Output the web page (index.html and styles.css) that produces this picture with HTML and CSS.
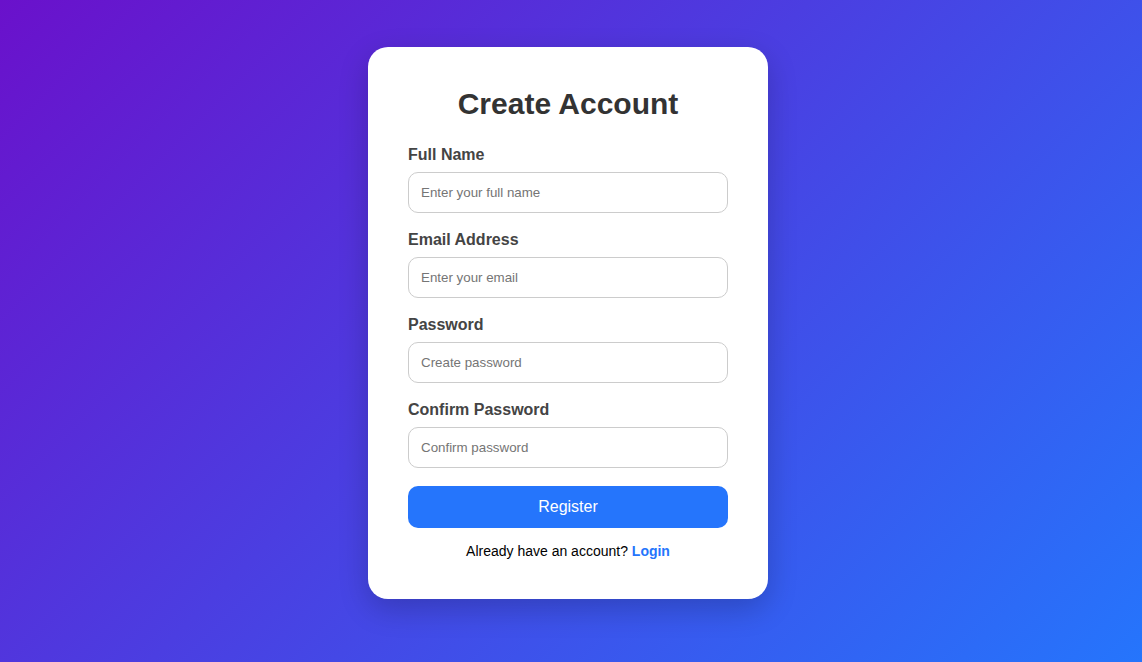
FILE: index.html
```html
<!DOCTYPE html>
<html lang="en">
<head>
  <meta charset="UTF-8" />
  <meta name="viewport" content="width=device-width, initial-scale=1.0"/>
  <title>Create Account</title>
  <link rel="stylesheet" href="styles.css">
</head>
<body>
  <div class="card">
    <h2>Create Account</h2>
    <form>
      <div class="field">
        <label for="fullName">Full Name</label>
        <input type="text" id="fullName" placeholder="Enter your full name"/>
      </div>
      <div class="field">
        <label for="email">Email Address</label>
        <input type="email" id="email" placeholder="Enter your email"/>
      </div>
      <div class="field">
        <label for="password">Password</label>
        <input type="password" id="password" placeholder="Create password"/>
      </div>
      <div class="field">
        <label for="confirm">Confirm Password</label>
        <input type="password" id="confirm" placeholder="Confirm password"/>
      </div>
      <button type="submit" class="register">Register</button>
    </form>
    <p class="footer">Already have an account? <a href="#">Login</a></p>
  </div>
</body>
</html>
```

FILE: styles.css
```css
* {
  box-sizing: border-box;
}

body {
  margin: 0;
  min-height: 100vh;
  display: flex;
  justify-content: center;
  align-items: flex-start;
  padding: 47px 6px 0 0;
  font-family: "Liberation Sans", Arial, sans-serif;
  background: linear-gradient(135deg, #6a11cb, #2575fc);
}

.card {
  width: 400px;
  padding: 40px;
  background: #fff;
  border-radius: 20px;
  box-shadow: 0 10px 30px rgba(0, 0, 0, 0.2);
}

.card h2 {
  margin: 0 0 25px;
  text-align: center;
  font-size: 30px;
  line-height: 34px;
  color: #333;
}

.field {
  display: flex;
  flex-direction: column;
  margin-bottom: 18px;
}

.field label {
  font-size: 16px;
  line-height: 18px;
  font-weight: bold;
  color: #444;
  margin-bottom: 8px;
}

.field input {
  height: 41px;
  padding: 0 12px;
  border: 1px solid #ccc;
  border-radius: 10px;
  font-family: inherit;
  font-size: 13.333px;
  color: #333;
  outline: none;
}

.field input::placeholder {
  color: #757575;
}

.register {
  display: block;
  width: 100%;
  height: 42px;
  border: none;
  border-radius: 10px;
  background-color: #2575fc;
  color: #fff;
  font-family: inherit;
  font-size: 16px;
  cursor: pointer;
}

.register:hover {
  background-color: #1a5fd6;
}

.footer {
  margin: 15px 0 0;
  text-align: center;
  font-size: 14px;
  line-height: 16px;
  color: #000;
}

.footer a {
  color: #2575fc;
  font-weight: bold;
  text-decoration: none;
}
```
